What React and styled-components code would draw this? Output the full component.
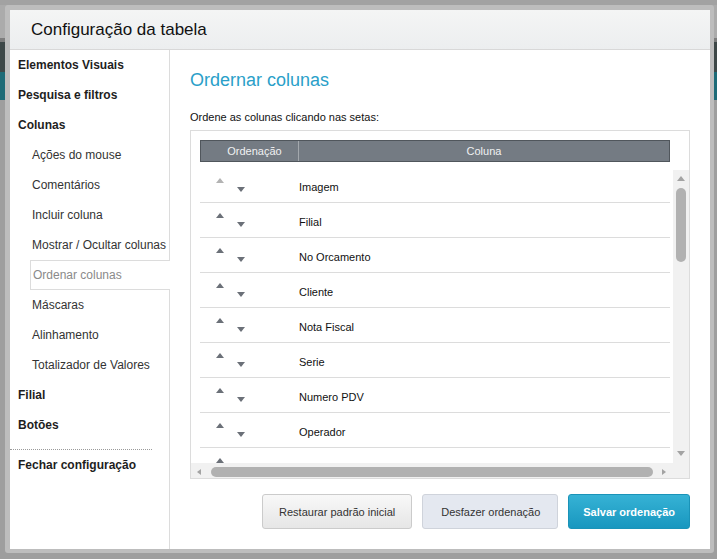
import styled, { createGlobalStyle, css } from 'styled-components';

const GlobalStyle = createGlobalStyle`
  html, body {
    margin: 0;
    padding: 0;
  }
  body {
    font-family: "Liberation Sans", Arial, sans-serif;
    background: #9e9e9e;
  }
  * {
    box-sizing: border-box;
  }
`;

const Backdrop = styled.div`
  width: 717px;
  height: 559px;
  padding: 5px 3px 6px 5px;
  background: linear-gradient(
    to bottom,
    #a2a2a2 0 5px,
    #ababab 5px 38px,
    #7d7d7d 38px 42px,
    #3e4848 42px 72px,
    #1d6b77 72px 100px,
    #9e9e9e 100px
  );
`;

const Modal = styled.div`
  height: 100%;
  display: flex;
  flex-direction: column;
  background: #fff;
  border-style: solid;
  border-color: #bdbdbd;
  border-width: 5px 4px 4px 5px;
  border-radius: 3px;
`;

const ModalHeader = styled.header`
  height: 40px;
  flex: none;
  display: flex;
  align-items: center;
  padding-left: 21px;
  background: linear-gradient(to bottom, #f4f5f5, #eceeef);
  border-bottom: 1px solid #d8d8d8;
`;

const ModalTitle = styled.h1`
  margin: 0;
  font-size: 17px;
  font-weight: normal;
  color: #111;
`;

const ModalBody = styled.div`
  flex: 1;
  display: flex;
  min-height: 0;
`;

const Sidebar = styled.nav`
  width: 160px;
  flex: none;
  border-right: 1px solid #dcdcdc;
`;

const NavItem = styled.div`
  height: 30px;
  display: flex;
  align-items: center;
  font-size: 12px;
  white-space: nowrap;
  ${(p) =>
    p.$sub
      ? css`
          padding-left: 22px;
          color: #333;
        `
      : css`
          padding-left: 8px;
          font-weight: bold;
          color: #1e1e1e;
        `}
  ${(p) =>
    p.$active &&
    css`
      margin-left: 20px;
      margin-right: -1px;
      padding-left: 2px;
      color: #8a8a8a;
      background: #fff;
      border: 1px solid #dcdcdc;
      border-right: none;
    `}
`;

const NavSeparator = styled.div`
  width: 142px;
  margin-top: 9px;
  border-top: 1px dotted #9a9a9a;
`;

const Main = styled.main`
  flex: 1;
  padding: 20px 20px 0 20px;
`;

const SectionTitle = styled.h2`
  margin: 0;
  font-size: 18px;
  line-height: 20px;
  font-weight: normal;
  color: #2a9fc9;
`;

const Hint = styled.p`
  margin: 20px 0 0;
  font-size: 11px;
  line-height: 14px;
  color: #111;
`;

const TableBox = styled.div`
  margin-top: 6px;
  height: 349px;
  border: 1px solid #dcdcdc;
  display: grid;
  grid-template-columns: 1fr 16px;
  grid-template-rows: 37px 1fr 15px;
  grid-template-areas:
    'head .'
    'body vbar'
    'hbar corner';
`;

const HeadBar = styled.div`
  grid-area: head;
  align-self: start;
  margin: 9px 3px 0 9px;
  height: 22px;
  display: flex;
  background: #747b83;
  border: 1px solid #50565c;
  color: #f0f1f2;
  font-size: 11px;
`;

const HeadCell = styled.div`
  display: flex;
  align-items: center;
  justify-content: center;
  ${(p) =>
    p.$order
      ? css`
          width: 98px;
          padding-left: 10px;
          border-right: 1px solid #a3a8ad;
        `
      : css`
          flex: 1;
        `}
`;

const RowsArea = styled.div`
  grid-area: body;
  overflow: hidden;
  padding: 0 3px 0 9px;
`;

const Row = styled.div`
  height: 35px;
  display: flex;
  border-bottom: 1px solid #dcdcdc;
`;

const OrderCell = styled.div`
  width: 99px;
  flex: none;
  display: flex;
  padding-left: 16px;
`;

const ArrowUp = styled.span`
  width: 0;
  height: 0;
  margin-top: 10px;
  border-left: 4px solid transparent;
  border-right: 4px solid transparent;
  border-bottom: 5px solid ${(p) => (p.$disabled ? '#b3b3b3' : '#6b7078')};
`;

const ArrowDown = styled.span`
  width: 0;
  height: 0;
  margin: 19px 0 0 13px;
  border-left: 4px solid transparent;
  border-right: 4px solid transparent;
  border-top: 5px solid #6b7078;
`;

const ColumnName = styled.div`
  align-self: center;
  padding-top: 4px;
  font-size: 11px;
  line-height: 14px;
  color: #111;
`;

const VScroll = styled.div`
  grid-area: vbar;
  margin-top: 2px;
  display: flex;
  flex-direction: column;
  align-items: center;
  padding: 6px 0 7px;
  background: #f1f1f1;
`;

const HScroll = styled.div`
  grid-area: hbar;
  display: flex;
  align-items: center;
  padding: 2px 0 0 6px;
  background: #f1f1f1;
`;

const Corner = styled.div`
  grid-area: corner;
  background: #f1f1f1;
`;

const Thumb = styled.div`
  background: #b1b1b1;
  border-radius: 5px;
  ${(p) =>
    p.$vertical
      ? css`
          width: 10px;
          height: 74px;
          margin-top: 7px;
        `
      : css`
          height: 10px;
          width: 442px;
          margin-left: 10px;
        `}
`;

const ScrollArrow = styled.span`
  width: 0;
  height: 0;
  ${(p) =>
    p.$dir === 'up' &&
    css`
      border-left: 4px solid transparent;
      border-right: 4px solid transparent;
      border-bottom: 5px solid #a3a3a3;
    `}
  ${(p) =>
    p.$dir === 'down' &&
    css`
      margin-top: auto;
      border-left: 4px solid transparent;
      border-right: 4px solid transparent;
      border-top: 5px solid #a3a3a3;
    `}
  ${(p) =>
    p.$dir === 'left' &&
    css`
      border-top: 3px solid transparent;
      border-bottom: 3px solid transparent;
      border-right: 4px solid #a3a3a3;
    `}
  ${(p) =>
    p.$dir === 'right' &&
    css`
      margin-left: 9px;
      border-top: 3px solid transparent;
      border-bottom: 3px solid transparent;
      border-left: 4px solid #a3a3a3;
    `}
`;

const Actions = styled.div`
  margin-top: 15px;
  display: flex;
  justify-content: flex-end;
  gap: 10px;
`;

const variants = {
  default: css`
    padding: 0 16px;
    color: #333;
    background: linear-gradient(to bottom, #f8f8f8, #e6e6e6);
    border-color: #cbcbcb;
  `,
  soft: css`
    padding: 0 17px 0 18px;
    color: #333;
    background: #e4e8f0;
    border-color: #cfd3db;
  `,
  primary: css`
    padding: 0 14px;
    color: #fff;
    font-weight: bold;
    background: linear-gradient(to bottom, #36b2d5, #1897bf);
    border-color: #1a93b8;
  `,
};

const Button = styled.button`
  height: 35px;
  font-family: inherit;
  font-size: 11px;
  border: 1px solid;
  border-radius: 3px;
  ${(p) => variants[p.$variant || 'default']}
`;

const menu = [
  { label: 'Elementos Visuais' },
  { label: 'Pesquisa e filtros' },
  { label: 'Colunas' },
  { label: 'Ações do mouse', sub: true },
  { label: 'Comentários', sub: true },
  { label: 'Incluir coluna', sub: true },
  { label: 'Mostrar / Ocultar colunas', sub: true },
  { label: 'Ordenar colunas', sub: true, active: true },
  { label: 'Máscaras', sub: true },
  { label: 'Alinhamento', sub: true },
  { label: 'Totalizador de Valores', sub: true },
  { label: 'Filial' },
  { label: 'Botões' },
];

// the last row is only half scrolled into view: its label sits below the fold
const columns = [
  'Imagem',
  'Filial',
  'No Orcamento',
  'Cliente',
  'Nota Fiscal',
  'Serie',
  'Numero PDV',
  'Operador',
  '',
];

export default function App() {
  return (
    <>
      <GlobalStyle />
      <Backdrop>
        <Modal>
          <ModalHeader>
            <ModalTitle>Configuração da tabela</ModalTitle>
          </ModalHeader>
          <ModalBody>
            <Sidebar>
              {menu.map((item) => (
                <NavItem key={item.label} $sub={item.sub} $active={item.active}>
                  {item.label}
                </NavItem>
              ))}
              <NavSeparator />
              <NavItem>Fechar configuração</NavItem>
            </Sidebar>

            <Main>
              <SectionTitle>Ordernar colunas</SectionTitle>
              <Hint>Ordene as colunas clicando nas setas:</Hint>
              <TableBox>
                <HeadBar>
                  <HeadCell $order>Ordenação</HeadCell>
                  <HeadCell>Coluna</HeadCell>
                </HeadBar>
                <RowsArea>
                  {columns.map((name, i) => (
                    <Row key={i}>
                      <OrderCell>
                        <ArrowUp $disabled={i === 0} />
                        <ArrowDown />
                      </OrderCell>
                      {name && <ColumnName>{name}</ColumnName>}
                    </Row>
                  ))}
                </RowsArea>
                <VScroll>
                  <ScrollArrow $dir="up" />
                  <Thumb $vertical />
                  <ScrollArrow $dir="down" />
                </VScroll>
                <HScroll>
                  <ScrollArrow $dir="left" />
                  <Thumb />
                  <ScrollArrow $dir="right" />
                </HScroll>
                <Corner />
              </TableBox>
              <Actions>
                <Button>Restaurar padrão inicial</Button>
                <Button $variant="soft">Desfazer ordenação</Button>
                <Button $variant="primary">Salvar ordenação</Button>
              </Actions>
            </Main>
          </ModalBody>
        </Modal>
      </Backdrop>
    </>
  );
}
